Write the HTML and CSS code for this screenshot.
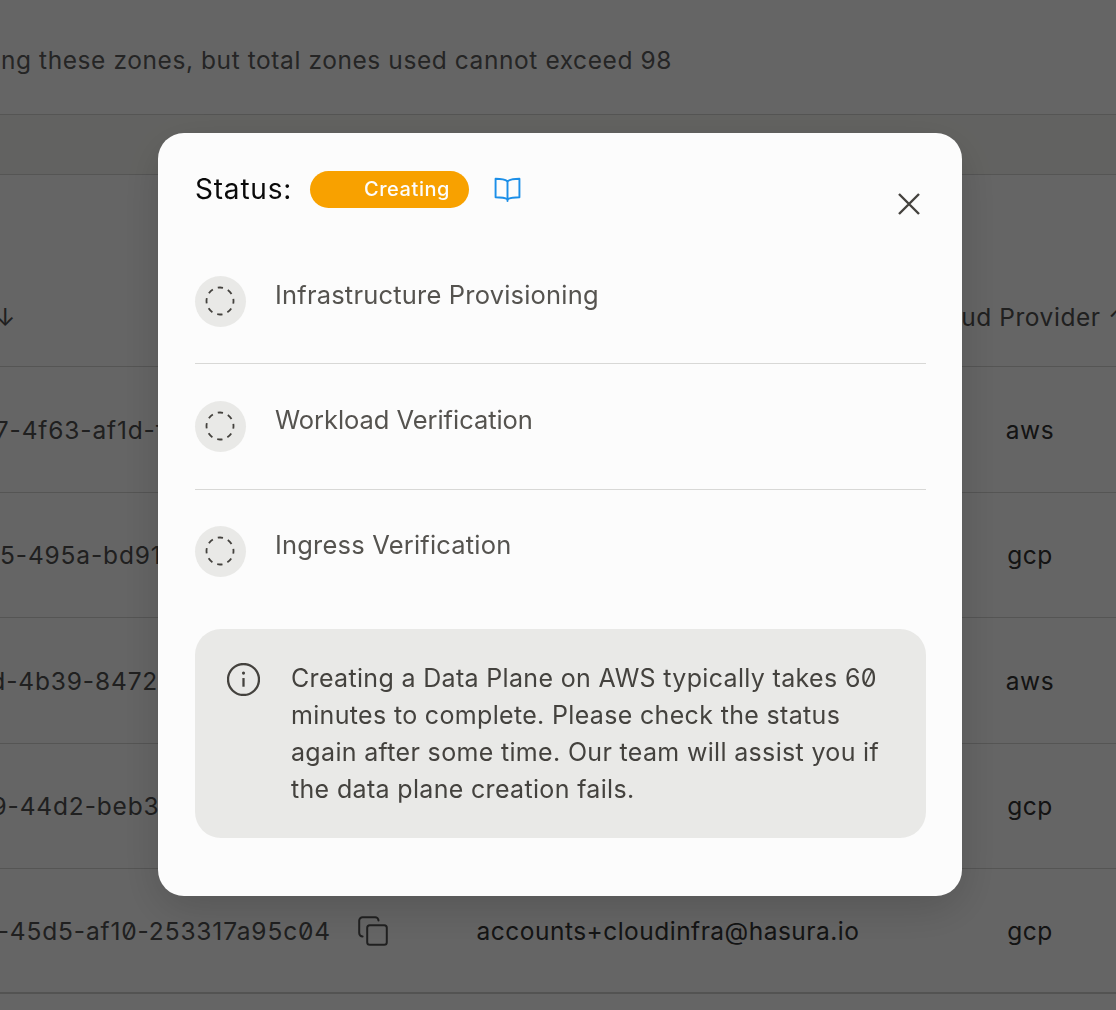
FILE: index.html
```html
<!DOCTYPE html>
<html lang="en">
<head>
<meta charset="utf-8">
<title>Data Planes</title>
<link rel="stylesheet" href="styles.css">
</head>
<body>
<main class="page">
  <div class="note"><span>You can create data planes using these zones, but total zones used cannot exceed 98</span></div>
  <div class="band"></div>
  <div class="thead">
    <div class="th-id"><span>Data Plane ID&nbsp;↓</span></div>
    <div class="th-owner">Created By</div>
    <div class="th-cloud">Cloud Provider ↑</div>
  </div>
  <div class="row">
    <div class="id"><span>a1c8e2d7-90b7-4f63-af1d-f07c2b91de35</span></div>
    <svg class="copy" viewBox="0 0 30 30"><use href="#copy-icon"/></svg>
    <div class="email">accounts+cloudinfra@hasura.io</div>
    <div class="cloud">aws</div>
  </div>
  <div class="row">
    <div class="id"><span>7b3e0c14-62a5-495a-bd91-1ce1f07a1261</span></div>
    <svg class="copy" viewBox="0 0 30 30"><use href="#copy-icon"/></svg>
    <div class="email">accounts+cloudinfra@hasura.io</div>
    <div class="cloud">gcp</div>
  </div>
  <div class="row">
    <div class="id"><span>e49f16a2-7c0d-4b39-8472-b15d1e13af18</span></div>
    <svg class="copy" viewBox="0 0 30 30"><use href="#copy-icon"/></svg>
    <div class="email">accounts+cloudinfra@hasura.io</div>
    <div class="cloud">aws</div>
  </div>
  <div class="row">
    <div class="id"><span>c07d28b5-1e39-44d2-beb3-91a1f1c1d807</span></div>
    <svg class="copy" viewBox="0 0 30 30"><use href="#copy-icon"/></svg>
    <div class="email">accounts+cloudinfra@hasura.io</div>
    <div class="cloud">gcp</div>
  </div>
  <div class="row">
    <div class="id"><span>5fa2b96e-d3c8-45d5-af10-253317a95c04</span></div>
    <svg class="copy" viewBox="0 0 30 30"><use href="#copy-icon"/></svg>
    <div class="email">accounts+cloudinfra@hasura.io</div>
    <div class="cloud">gcp</div>
  </div>
</main>

<svg class="defs" width="0" height="0" aria-hidden="true">
  <symbol id="copy-icon" viewBox="0 0 30 30">
    <rect x="9.2" y="9.2" width="19.6" height="19.6" rx="2.6" fill="none" stroke="currentColor" stroke-width="2"/>
    <path d="M4.6 20.5A3.4 3.4 0 0 1 1.2 17.1V4.6A3.4 3.4 0 0 1 4.6 1.2H17.1A3.4 3.4 0 0 1 20.5 4.6" fill="none" stroke="currentColor" stroke-width="2" stroke-linecap="round"/>
  </symbol>
  <symbol id="pending-icon" viewBox="0 0 30 30">
    <circle cx="15" cy="15" r="13.5" fill="none" stroke="currentColor" stroke-width="1.8" stroke-dasharray="5.4 5.2" stroke-dashoffset="2.7"/>
  </symbol>
</svg>

<div class="overlay">
  <section class="modal" role="dialog">
    <header class="status">
      <span class="status-label">Status:</span>
      <span class="pill">Creating</span>
      <svg class="book" viewBox="0 0 28 26" fill="none" stroke="currentColor" stroke-width="2" stroke-linejoin="round" stroke-linecap="round">
        <path d="M14 4.4C11.6 2.6 8 1.8 1.6 1.8V21C8 21 11.6 21.6 14 23.2C16.4 21.6 20 21 26.4 21V1.8C20 1.8 16.4 2.6 14 4.4Z"/>
        <path d="M14 4.4V25"/>
      </svg>
      <button class="close" type="button" aria-label="Close">
        <svg viewBox="0 0 22 22" fill="none" stroke="currentColor" stroke-width="2.4"><path d="M1 1L21 21M21 1L1 21"/></svg>
      </button>
    </header>
    <div class="step">
      <span class="step-dot"><svg viewBox="0 0 30 30"><use href="#pending-icon"/></svg></span>
      <span class="step-name">Infrastructure Provisioning</span>
    </div>
    <div class="step mid">
      <span class="step-dot"><svg viewBox="0 0 30 30"><use href="#pending-icon"/></svg></span>
      <span class="step-name">Workload Verification</span>
    </div>
    <div class="step last">
      <span class="step-dot"><svg viewBox="0 0 30 30"><use href="#pending-icon"/></svg></span>
      <span class="step-name">Ingress Verification</span>
    </div>
    <div class="info">
      <svg class="info-icon" viewBox="0 0 32 32" fill="none" stroke="currentColor">
        <circle cx="16" cy="16" r="15" stroke-width="2.2"/>
        <path d="M16 14.6V23" stroke-width="2.2"/>
        <circle cx="16" cy="9.8" r="1.5" fill="currentColor" stroke="none"/>
      </svg>
      <p>Creating a Data Plane on AWS typically takes 60 minutes to complete. Please check the status again after some time. Our team will assist you if the data plane creation fails.</p>
    </div>
  </section>
</div>
</body>
</html>
```

FILE: styles.css
```css
* { box-sizing: border-box; }

html, body {
  margin: 0;
  height: 1010px;
  overflow: hidden;
}

body {
  background: #fcfcfc;
  font-family: Inter, "Liberation Sans", sans-serif;
  font-size: 24.5px;
  font-feature-settings: "zero";
  color: #505050;
  letter-spacing: 0.55px;
}

.page {
  width: 1116px;
  height: 1010px;
  overflow: hidden;
}

.note {
  height: 114px;
  width: 672px;
  display: flex;
  justify-content: flex-end;
  align-items: center;
  white-space: nowrap;
  padding-top: 6px;
  color: #5c5c5c;
  letter-spacing: 0.58px;
}

.band {
  height: 61px;
  width: 100%;
  background: #f6f6f2;
  border-top: 1px solid #d4d4d2;
  border-bottom: 1px solid #d4d4d2;
}

.thead {
  height: 191px;
  display: grid;
  grid-template-columns: 16px 920px 178px;
  align-items: center;
  padding-top: 92px;
  white-space: nowrap;
}

.th-id {
  display: flex;
  justify-content: flex-end;
}

.th-owner {
  text-align: center;
}

.th-cloud {
  display: flex;
  justify-content: center;
}

.row {
  height: 125.5px;
  display: grid;
  grid-template-columns: 331px 27px 30px 560px 164px;
  align-items: center;
  border-top: 1px solid #d4d4d2;
  padding-top: 1px;
  white-space: nowrap;
}

.row:last-child {
  border-bottom: 2px solid #cfcfcd;
}

.id {
  display: flex;
  justify-content: flex-end;
  letter-spacing: 0.85px;
}

.copy {
  grid-column: 3;
  width: 30px;
  height: 30px;
}

.email {
  grid-column: 4;
  text-align: center;
  color: #333;
  letter-spacing: 0.48px;
}

.cloud {
  grid-column: 5;
  text-align: center;
  color: #333;
}

.defs {
  position: absolute;
}

.overlay {
  position: fixed;
  inset: 0;
  background: rgba(0, 0, 0, 0.6);
  display: flex;
  align-items: flex-start;
  justify-content: center;
  padding: 133px 0 0 4px;
}

.modal {
  width: 804px;
  height: 763px;
  background: #fcfcfc;
  border-radius: 26px;
  padding: 38px 36px 0 37px;
  box-shadow: 0 12px 44px rgba(0, 0, 0, 0.16);
  color: #55534f;
}

.status {
  position: relative;
  display: flex;
  align-items: center;
  height: 37px;
  margin-bottom: 68px;
}

.status-label {
  color: #0a0a0a;
  font-size: 28px;
  letter-spacing: 0.8px;
  margin-right: 19px;
  padding-bottom: 2px;
  width: 96px;
  flex: none;
}

.pill {
  width: 159px;
  height: 37px;
  border-radius: 19px;
  background: #f8a100;
  color: #fcfcfc;
  font-size: 20px;
  font-weight: 500;
  letter-spacing: 0.55px;
  display: flex;
  align-items: center;
  justify-content: flex-end;
  padding: 0 19px 2px 0;
}

.book {
  width: 27px;
  height: 25px;
  margin-left: 25px;
  color: #1c8fe8;
}

.close {
  position: absolute;
  right: 6px;
  top: 22px;
  width: 22px;
  height: 22px;
  padding: 0;
  border: 0;
  background: none;
  color: #44423e;
}

.close svg {
  display: block;
}

.step {
  display: flex;
  align-items: flex-start;
  gap: 29px;
  height: 88px;
  margin-bottom: 37px;
  border-bottom: 1px solid #d8d8d6;
}

.step.mid {
  height: 89px;
  margin-bottom: 36px;
}

.step.last {
  height: 51px;
  margin-bottom: 52px;
  border-bottom: 0;
}

.step-dot {
  width: 51px;
  height: 51px;
  border-radius: 50%;
  background: #e9e9e7;
  display: flex;
  align-items: center;
  justify-content: center;
  color: #44423e;
  flex: none;
}

.step-dot svg {
  width: 30px;
  height: 30px;
  margin: 0 1px 1px 0;
}

.step-name {
  margin-top: 3px;
  font-size: 25.5px;
  line-height: 32px;
  letter-spacing: 0.19px;
}

.step.mid .step-name {
  letter-spacing: -0.05px;
}

.info {
  display: flex;
  gap: 31px;
  height: 209px;
  padding: 31px 32px;
  border-radius: 26px;
  background: #e9e9e7;
  color: #44423e;
}

.info-icon {
  width: 33px;
  height: 33px;
  margin-top: 3px;
  flex: none;
}

.info p {
  margin: 0;
  font-size: 25px;
  line-height: 37px;
  letter-spacing: 0.33px;
}
```
